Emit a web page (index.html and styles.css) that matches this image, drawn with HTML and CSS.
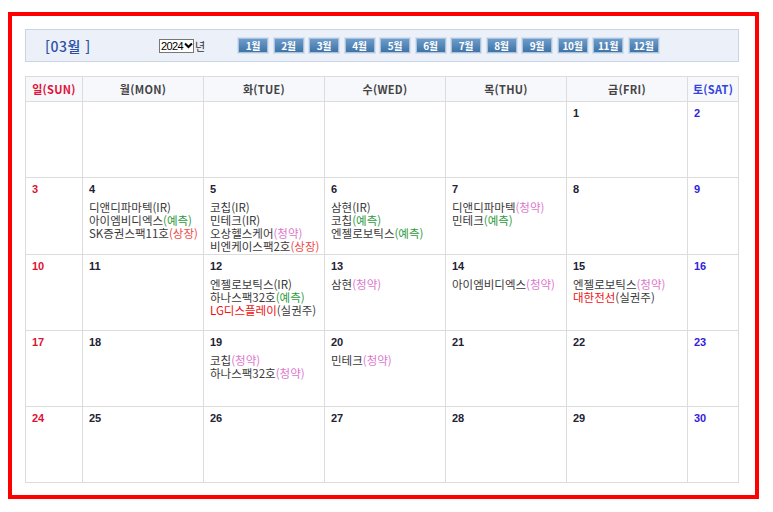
FILE: index.html
```html
<!DOCTYPE html>
<html lang="ko">
<head>
<meta charset="utf-8">
<link rel="stylesheet" href="styles.css">
</head>
<body>
<div class="frame">
  <div class="topbar">
    <div class="month-title">[03월 ]</div>
    <div class="year-pick">
      <span class="fake-select">2024<svg class="chev" width="9" height="7" viewBox="0 0 9 7"><path d="M1 1.5 L4.5 5 L8 1.5" fill="none" stroke="#000" stroke-width="2"/></svg></span><span class="year-label">년</span>
    </div>
    <div class="month-buttons">
      <span class="mbtn">1월</span><span class="mbtn">2월</span><span class="mbtn">3월</span><span class="mbtn">4월</span><span class="mbtn">5월</span><span class="mbtn">6월</span><span class="mbtn">7월</span><span class="mbtn">8월</span><span class="mbtn">9월</span><span class="mbtn">10월</span><span class="mbtn">11월</span><span class="mbtn">12월</span>
    </div>
  </div>

  <div class="cal">
    <div class="hd sun">일(SUN)</div>
    <div class="hd">월(MON)</div>
    <div class="hd">화(TUE)</div>
    <div class="hd">수(WED)</div>
    <div class="hd">목(THU)</div>
    <div class="hd">금(FRI)</div>
    <div class="hd sat">토(SAT)</div>

    <div class="cell"></div>
    <div class="cell"></div>
    <div class="cell"></div>
    <div class="cell"></div>
    <div class="cell"></div>
    <div class="cell"><div class="num">1</div></div>
    <div class="cell"><div class="num sat">2</div></div>

    <div class="cell"><div class="num sun">3</div></div>
    <div class="cell"><div class="num">4</div>
      <div class="ev">디앤디파마텍(IR)</div>
      <div class="ev">아이엠비디엑스<span class="g">(예측)</span></div>
      <div class="ev">SK증권스팩11호<span class="r">(상장)</span></div>
    </div>
    <div class="cell"><div class="num">5</div>
      <div class="ev">코칩(IR)</div>
      <div class="ev">민테크(IR)</div>
      <div class="ev">오상헬스케어<span class="p">(청약)</span></div>
      <div class="ev">비엔케이스팩2호<span class="r">(상장)</span></div>
    </div>
    <div class="cell"><div class="num">6</div>
      <div class="ev">삼현(IR)</div>
      <div class="ev">코칩<span class="g">(예측)</span></div>
      <div class="ev">엔젤로보틱스<span class="g">(예측)</span></div>
    </div>
    <div class="cell"><div class="num">7</div>
      <div class="ev">디앤디파마텍<span class="p">(청약)</span></div>
      <div class="ev">민테크<span class="g">(예측)</span></div>
    </div>
    <div class="cell"><div class="num">8</div></div>
    <div class="cell"><div class="num sat">9</div></div>

    <div class="cell"><div class="num sun">10</div></div>
    <div class="cell"><div class="num">11</div></div>
    <div class="cell"><div class="num">12</div>
      <div class="ev">엔젤로보틱스(IR)</div>
      <div class="ev">하나스팩32호<span class="g">(예측)</span></div>
      <div class="ev"><span class="hot">LG디스플레이</span>(실권주)</div>
    </div>
    <div class="cell"><div class="num">13</div>
      <div class="ev">삼현<span class="p">(청약)</span></div>
    </div>
    <div class="cell"><div class="num">14</div>
      <div class="ev">아이엠비디엑스<span class="p">(청약)</span></div>
    </div>
    <div class="cell"><div class="num">15</div>
      <div class="ev">엔젤로보틱스<span class="p">(청약)</span></div>
      <div class="ev"><span class="hot">대한전선</span>(실권주)</div>
    </div>
    <div class="cell"><div class="num sat">16</div></div>

    <div class="cell"><div class="num sun">17</div></div>
    <div class="cell"><div class="num">18</div></div>
    <div class="cell"><div class="num">19</div>
      <div class="ev">코칩<span class="p">(청약)</span></div>
      <div class="ev">하나스팩32호<span class="p">(청약)</span></div>
    </div>
    <div class="cell"><div class="num">20</div>
      <div class="ev">민테크<span class="p">(청약)</span></div>
    </div>
    <div class="cell"><div class="num">21</div></div>
    <div class="cell"><div class="num">22</div></div>
    <div class="cell"><div class="num sat">23</div></div>

    <div class="cell"><div class="num sun">24</div></div>
    <div class="cell"><div class="num">25</div></div>
    <div class="cell"><div class="num">26</div></div>
    <div class="cell"><div class="num">27</div></div>
    <div class="cell"><div class="num">28</div></div>
    <div class="cell"><div class="num">29</div></div>
    <div class="cell"><div class="num sat">30</div></div>
  </div>
</div>
</body>
</html>
```
FILE: styles.css
```css
html, body {
  margin: 0;
  padding: 0;
  background: #fff;
}
body {
  padding: 12px 0 0 8px;
  font-family: "Noto Sans CJK KR", "Noto Sans", sans-serif;
}
.frame {
  box-sizing: border-box;
  width: 751px;
  height: 487px;
  border: 4px solid #ff0000;
  padding: 13px 16px 12px 13px;
}
.topbar {
  box-sizing: border-box;
  width: 714px;
  height: 33px;
  border: 1px solid #cbd3e6;
  background: #ebf0f9;
  display: flex;
  align-items: center;
}
.month-title {
  margin-left: 19px;
  width: 114px;
  font-size: 14px;
  font-weight: 500;
  color: #2c50a8;
  letter-spacing: 0.5px;
  line-height: 14px;
}
.year-pick {
  display: flex;
  align-items: center;
  width: 79px;
}
.fake-select {
  box-sizing: border-box;
  width: 35px;
  height: 14px;
  border: 1px solid #777;
  background: #fff;
  font-family: "Liberation Sans", sans-serif;
  font-size: 11px;
  letter-spacing: -0.6px;
  line-height: 12px;
  padding-left: 1px;
  display: flex;
  align-items: center;
  gap: 1px;
}
.chev {
  display: block;
}
.year-label {
  font-size: 11px;
  color: #333;
  line-height: 12px;
  margin-left: 1px;
}
.month-buttons {
  display: flex;
  gap: 5.5px;
}
.mbtn {
  box-sizing: border-box;
  width: 30px;
  height: 15px;
  background: linear-gradient(#6c9ccb, #3f74a6);
  border: 1px solid #a9c3de;
  outline: 1px solid #d6e0ee;
  color: #fff;
  font-size: 10px;
  font-weight: bold;
  line-height: 13px;
  text-align: center;
  letter-spacing: -0.3px;
}
.cal {
  margin-top: 14px;
  width: 714px;
  display: grid;
  grid-template-columns: 57px 121px 121px 121px 121px 121px 51px;
  grid-template-rows: 25px 76px 77px 76px 76px 76px;
  border-left: 1px solid #dcdcdc;
  border-top: 1px solid #dcdcdc;
  box-sizing: border-box;
}
.hd, .cell {
  border-right: 1px solid #dcdcdc;
  border-bottom: 1px solid #dcdcdc;
}
.hd {
  background: #f7f8fb;
  font-size: 11px;
  font-weight: bold;
  color: #444;
  display: flex;
  align-items: center;
  justify-content: center;
  letter-spacing: 0.3px;
}
.hd.sun { color: #e0113a; }
.hd.sat { color: #3344dd; }
.cell {
  padding: 5px 5px 0 6px;
  background: #fff;
}
.num {
  font-family: "Liberation Sans", Arial, sans-serif;
  font-weight: bold;
  font-size: 11px;
  line-height: 13px;
  color: #222233;
  margin-bottom: 5px;
}
.num.sun { color: #dd1133; }
.num.sat { color: #3322dd; }
.ev {
  font-size: 11.5px;
  line-height: 13px;
  color: #3a3a3a;
  white-space: nowrap;
  letter-spacing: 0;
}
.g { color: #2e9a3e; }
.r { color: #f04848; }
.p { color: #dd77cc; }
.hot { color: #ee1111; }
```
